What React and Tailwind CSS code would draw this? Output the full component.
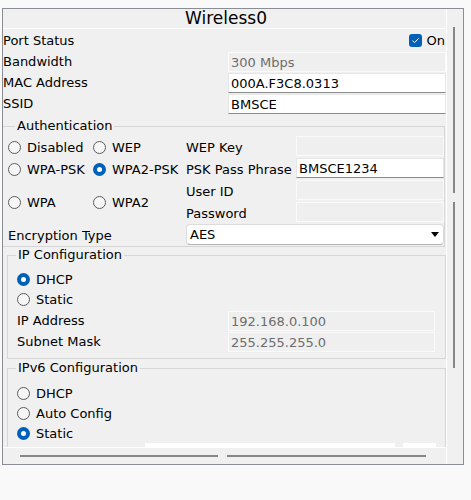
import React from "react";

const F = { fontFamily: '"DejaVu Sans", Verdana, sans-serif' };

function Radio({ checked }) {
  if (checked) {
    return (
      <span className="w-[13px] h-[13px] rounded-full bg-[#005fb8] flex items-center justify-center shrink-0">
        <span className="w-[5px] h-[5px] rounded-full bg-white" />
      </span>
    );
  }
  return <span className="w-[13px] h-[13px] rounded-full border border-[#5c5c5c] bg-[#f6f6f6] shrink-0" />;
}

function RadioLabel({ checked, label, w }) {
  return (
    <div className={"flex items-center gap-[6px] " + (w || "")}>
      <Radio checked={checked} />
      <span>{label}</span>
    </div>
  );
}

function Disabled({ value, cls }) {
  return (
    <div className={"h-[20px] bg-[#efefef] border border-[#fafafa] flex items-center pl-[2px] text-[#6d6d6d] " + (cls || "")}>
      {value}
    </div>
  );
}

function Enabled({ value, cls }) {
  return (
    <div className={"h-[20px] bg-white border border-[#e6e6e6] border-b-[#8a8a8a] flex items-center pl-[2px] text-black " + (cls || "")}>
      {value}
    </div>
  );
}

export default function App() {
  return (
    <div className="w-[471px] h-[500px] bg-[#f9f9f9] pt-[8px] pl-[2px] text-[13px] text-black leading-none" style={F}>
      <div className="w-[462px] h-[457px] border border-[#8a8d93] bg-[#f0f0f0] flex">
        {/* main column */}
        <div className="w-[443px] flex flex-col">
          <div className="h-[20px] border-b border-white flex items-center justify-center text-[17px] pl-[3px]">
            Wireless0
          </div>
          <div className="h-[418px] overflow-hidden pt-[1px]">
            <div className="h-[21px] flex items-center justify-between pr-[1px]">
              <span>Port Status</span>
              <div className="flex items-center gap-[5px]">
                <span className="w-[13px] h-[13px] rounded-[3px] bg-[#005fb8] flex items-center justify-center">
                  <svg width="9" height="9" viewBox="0 0 9 9" fill="none">
                    <path d="M1.5 4.6 L3.6 6.6 L7.6 2.4" stroke="white" strokeWidth="1" />
                  </svg>
                </span>
                <span>On</span>
              </div>
            </div>
            <div className="h-[21px] flex items-end">
              <span className="w-[225px] self-center">Bandwidth</span>
              <Disabled value="300 Mbps" cls="flex-1" />
            </div>
            <div className="h-[21px] flex items-end">
              <span className="w-[225px] self-center">MAC Address</span>
              <Enabled value="000A.F3C8.0313" cls="flex-1" />
            </div>
            <div className="h-[21px] flex items-end">
              <span className="w-[225px] self-center">SSID</span>
              <Enabled value="BMSCE" cls="flex-1" />
            </div>

            {/* Authentication */}
            <div className="mt-[12px] w-[442px] border-t border-r border-b border-[#d6d6d6] relative pt-[9px]">
              <span className="absolute left-[12px] top-[-8px] bg-[#f0f0f0] px-[2px]">Authentication</span>
              <div className="grid grid-cols-[183px_110px_148px] grid-rows-[22px_22px_22px_22px_22px]">
                <div className="flex items-center pl-[5px]">
                  <RadioLabel label="Disabled" w="w-[85px]" />
                  <RadioLabel label="WEP" />
                </div>
                <div className="flex items-center">WEP Key</div>
                <div><Disabled value="" /></div>

                <div className="flex items-center pl-[5px]">
                  <RadioLabel label="WPA-PSK" w="w-[85px]" />
                  <RadioLabel label="WPA2-PSK" checked />
                </div>
                <div className="flex items-center">PSK Pass Phrase</div>
                <div><Enabled value="BMSCE1234" /></div>

                <div className="row-span-2 flex items-center pl-[5px]">
                  <RadioLabel label="WPA" w="w-[85px]" />
                  <RadioLabel label="WPA2" />
                </div>
                <div className="flex items-center">User ID</div>
                <div><Disabled value="" /></div>

                <div className="flex items-center">Password</div>
                <div><Disabled value="" /></div>

                <div className="flex items-center pl-[5px]">Encryption Type</div>
                <div className="col-span-2">
                  <div className="h-[21px] bg-white border border-[#dcdcdc] border-b-[#b5b5b5] rounded-[4px] flex items-center justify-between pl-[3px] pr-[4px]">
                    <span>AES</span>
                    <svg width="8" height="5" viewBox="0 0 8 5">
                      <path d="M0 0 H8 L4 5 Z" fill="#000" />
                    </svg>
                  </div>
                </div>
              </div>
            </div>

            {/* IP Configuration */}
            <div className="mt-[8px] ml-[4px] w-[439px] border border-[#d6d6d6] relative pt-[13px] pb-[6px] pl-[9px]">
              <span className="absolute left-[8px] top-[-8px] bg-[#f0f0f0] px-[2px]">IP Configuration</span>
              <div className="h-[20px] flex items-center"><RadioLabel label="DHCP" checked /></div>
              <div className="h-[21px] flex items-center"><RadioLabel label="Static" /></div>
              <div className="h-[21px] flex items-end">
                <span className="w-[211px] self-center">IP Address</span>
                <Disabled value="192.168.0.100" cls="w-[207px]" />
              </div>
              <div className="h-[21px] flex items-end">
                <span className="w-[211px] self-center">Subnet Mask</span>
                <Disabled value="255.255.255.0" cls="w-[207px]" />
              </div>
            </div>

            {/* IPv6 Configuration */}
            <div className="mt-[9px] ml-[4px] w-[439px] border border-[#d6d6d6] relative pt-[14px] pl-[9px]">
              <span className="absolute left-[8px] top-[-8px] bg-[#f0f0f0] px-[2px]">IPv6 Configuration</span>
              <div className="h-[20px] flex items-center"><RadioLabel label="DHCP" /></div>
              <div className="h-[20px] flex items-center"><RadioLabel label="Auto Config" /></div>
              <div className="h-[20px] flex items-center"><RadioLabel label="Static" checked /></div>
              <div className="h-[21px] flex items-start">
                <div className="w-[128px]" />
                <div className="w-[250px] h-[20px] bg-white" />
                <div className="w-[8px]" />
                <div className="w-[33px] h-[20px] bg-white" />
              </div>
            </div>
          </div>
          {/* horizontal scrollbar */}
          <div className="h-[17px] border-t border-white flex items-start pt-[7px] pl-[17px]">
            <div className="w-[198px] h-[2px] bg-[#868686]" />
            <div className="w-[199px] h-[2px] bg-[#868686] ml-[9px]" />
          </div>
        </div>
        <div className="w-px bg-white" />
        {/* vertical scrollbar */}
        <div className="w-[16px] flex flex-col pl-[6px] pt-[18px]">
          <div className="w-[2px] h-[166px] bg-[#868686]" />
          <div className="w-[2px] h-[166px] bg-[#868686] mt-[9px]" />
        </div>
      </div>
    </div>
  );
}
